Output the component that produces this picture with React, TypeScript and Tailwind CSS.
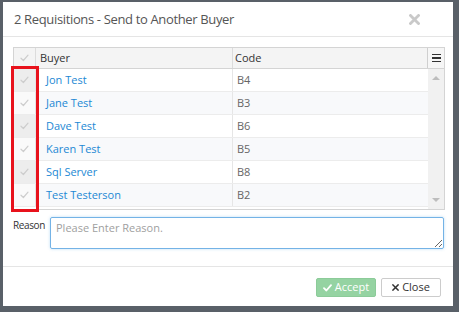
import React from 'react';

// Rows shown in the buyer grid
const BUYERS = [
  { name: 'Jon Test', code: 'B4' },
  { name: 'Jane Test', code: 'B3' },
  { name: 'Dave Test', code: 'B6' },
  { name: 'Karen Test', code: 'B5' },
  { name: 'Sql Server', code: 'B8' },
  { name: 'Test Testerson', code: 'B2' },
];

function Check({ color = '#cdcdcd', width = 1.2 }: { color?: string; width?: number }) {
  return (
    <svg width="9" height="8" viewBox="0 0 9 8" fill="none">
      <path d="M1 4.2 L3.4 6.5 L8 1.2" stroke={color} strokeWidth={width} strokeLinecap="round" strokeLinejoin="round" />
    </svg>
  );
}

function BoldX({ size = 11, color = '#c9c9c9', width = 2.8 }: { size?: number; color?: string; width?: number }) {
  return (
    <svg width={size} height={size} viewBox="0 0 11 11" fill="none">
      <path d="M1.5 1.5 L9.5 9.5 M9.5 1.5 L1.5 9.5" stroke={color} strokeWidth={width} strokeLinecap="square" />
    </svg>
  );
}

export default function App() {
  return (
    <div className="w-[459px] h-[312px] bg-[#596068] pt-[2px] pl-[3px] font-['Open_Sans',sans-serif] overflow-hidden">
      <div className="w-[450px] h-[304px] bg-white flex flex-col">
        {/* Header */}
        <div className="h-[35px] shrink-0 border-b border-[#e5e5e5] flex items-center justify-between pl-[11px] pr-[33px]">
          <span className="text-[13px] tracking-[-0.35px] text-[#555] leading-none">
            2 Requisitions - Send to Another Buyer
          </span>
          <BoldX />
        </div>

        {/* Body */}
        <div className="pl-[10px] pt-[10px]">
          <div className="relative w-[432px] border border-[#d4d4d4]">
            {/* Grid header */}
            <div className="flex h-[21px] bg-[#f4f4f4] border-b border-[#d4d4d4] text-[11px] text-[#333]">
              <div className="w-[22px] border-r border-[#dcdcdc] flex items-center justify-center">
                <Check />
              </div>
              <div className="w-[197px] border-r border-[#dcdcdc] flex items-center pl-[4px]">Buyer</div>
              <div className="flex-1 flex items-center pl-[2px]">Code</div>
              <div className="w-[17px] border-l border-[#cfcfcf] bg-[#f6f6f6] flex flex-col items-center justify-center gap-[2px]">
                <span className="block w-[9px] h-[1.5px] bg-[#333]" />
                <span className="block w-[9px] h-[1.5px] bg-[#333]" />
                <span className="block w-[9px] h-[1.5px] bg-[#333]" />
              </div>
            </div>

            {/* Grid body */}
            <div className="flex h-[140px]">
              <div className="flex-1 flex flex-col">
                {BUYERS.map((b, i) => (
                  <div
                    key={b.code}
                    className={`flex h-[23px] border-b border-[#ececec] text-[11px] ${i % 2 === 1 ? 'bg-[#f8f9fb]' : 'bg-white'}`}
                  >
                    <div
                      className={`w-[22px] border-r border-[#e4e4e4] flex items-center justify-center ${i % 2 === 0 ? 'bg-[#ededed]' : 'bg-[#fafafa]'}`}
                    >
                      <Check />
                    </div>
                    <div className="w-[197px] border-r border-[#e6e6e6] flex items-center pl-[10px] text-[#2388d4]">
                      {b.name}
                    </div>
                    <div className="flex-1 flex items-center pl-[4px] text-[#666]">{b.code}</div>
                  </div>
                ))}
              </div>
              <div className="w-[16px] bg-[#f1f1f1] flex flex-col items-center justify-between py-[7px]">
                <span className="block w-0 h-0 border-x-[4px] border-x-transparent border-b-[4px] border-b-[#bdbdbd]" />
                <span className="block w-0 h-0 border-x-[4px] border-x-transparent border-t-[4px] border-t-[#bdbdbd]" />
              </div>
            </div>

            {/* Annotation box over the checkbox column */}
            <div className="absolute left-[-3px] top-[18px] w-[28px] h-[146px] border-[3px] border-[#e8121c]" />
          </div>

          {/* Reason */}
          <div className="flex mt-[7px]">
            <label className="w-[37px] pt-[1px] text-[10px] tracking-[-0.4px] text-[#333]">Reason</label>
            <textarea
              placeholder="Please Enter Reason."
              className="w-[394px] h-[32px] border border-[#74b3e6] rounded-[2px] px-[5px] py-[2px] text-[11px] text-[#555] placeholder:text-[#a0a0a0] outline-none shadow-[0_0_3px_rgba(102,175,233,0.45)] resize-y"
            />
          </div>
        </div>

        {/* Footer */}
        <div className="mt-[17px] border-t border-[#e5e5e5] flex justify-end gap-[5px] pt-[11px] pr-[12px]">
          <button className="w-[60px] h-[19px] rounded-[2px] bg-[#95d3a2] border border-[#8ccb99] text-white text-[11px] flex items-center justify-center gap-[3px]">
            <Check color="#ffffff" width={1.8} />
            Accept
          </button>
          <button className="w-[60px] h-[19px] rounded-[2px] bg-white border border-[#cccccc] text-[#333] text-[11px] flex items-center justify-center gap-[3px]">
            <BoldX size={7} color="#333" width={2.4} />
            Close
          </button>
        </div>
      </div>
    </div>
  );
}
